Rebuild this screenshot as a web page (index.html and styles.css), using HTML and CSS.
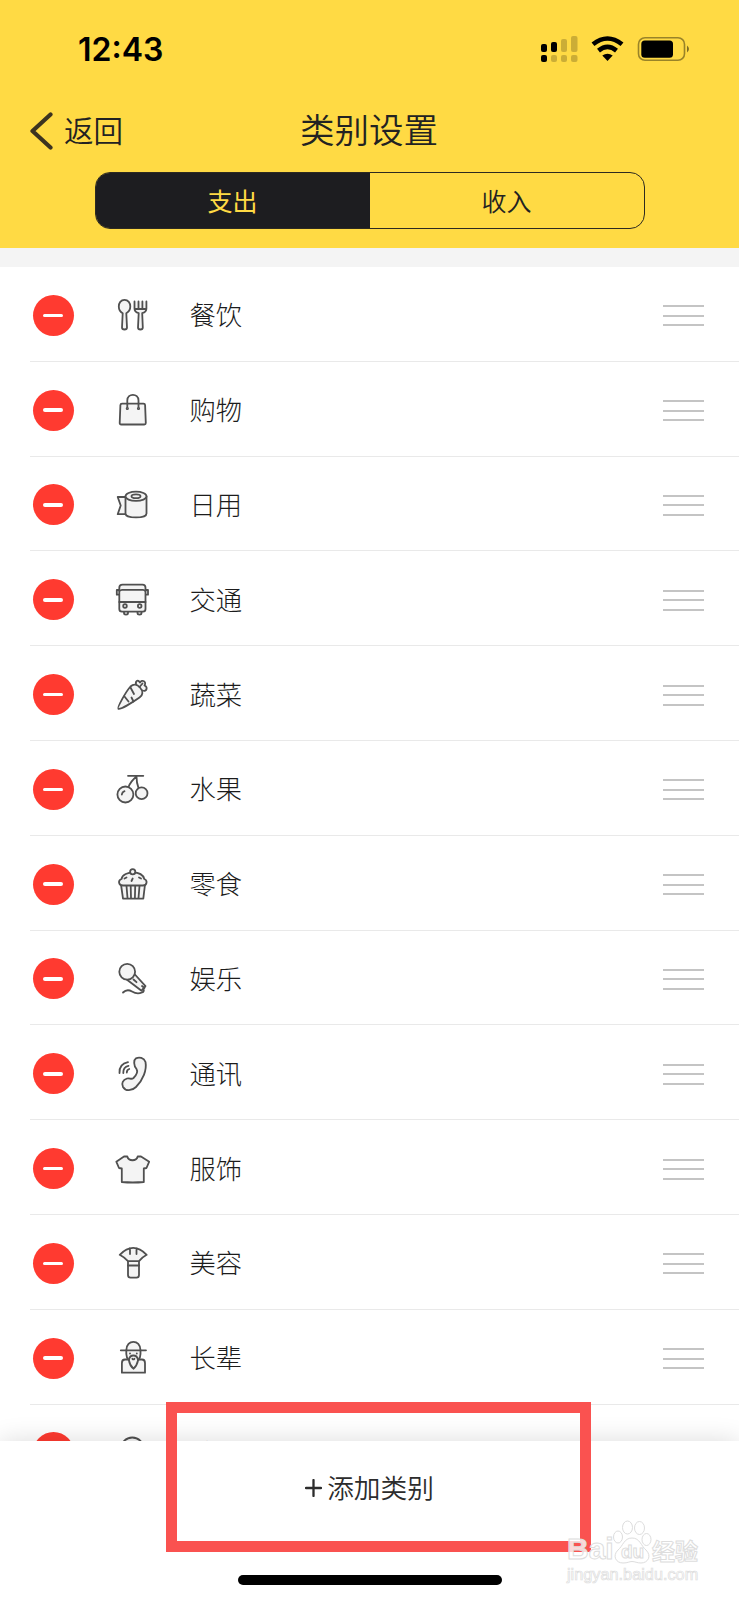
FILE: index.html
```html
<!DOCTYPE html>
<html lang="zh-CN">
<head>
    <meta charset="UTF-8">
    <meta name="viewport" content="width=device-width, initial-scale=1.0">
    <title>类别设置</title>
    <link rel="stylesheet" href="styles.css">
</head>
<body>
    <div class="app">
        <header class="header">
            <div class="status-bar">
                <span class="time">12:43</span>
                <svg class="status-icons" width="150" height="28" viewBox="0 0 150 28">
                    <g>
                        <rect x="1" y="10" width="6" height="8" rx="2"/>
                        <rect x="11" y="8" width="6" height="10" rx="2"/>
                        <rect x="1" y="21" width="6" height="7" rx="2"/>
                    </g>
                    <g opacity=".2">
                        <rect x="21" y="5" width="6" height="13" rx="2"/>
                        <rect x="31" y="2" width="6.500" height="16" rx="2"/>
                        <rect x="11" y="21" width="6" height="7" rx="2"/>
                        <rect x="21" y="21" width="6" height="7" rx="2"/>
                        <rect x="31" y="21" width="6.500" height="7" rx="2"/>
                    </g>
                    <g fill="none" stroke="#000" stroke-width="4.600">
                        <path d="M53 10.300Q67.500-1.300 82 10.300"/>
                        <path d="M58.500 16.600Q67.500 9.200 76.500 16.600"/>
                    </g>
                    <path d="M62.300 21.500Q67.500 18.200 72.700 21.500L67.500 27z"/>
                    <rect x="98.500" y="3.700" width="46" height="22.600" rx="6.500" fill="none" stroke="#000" stroke-width="1.600" opacity=".4"/>
                    <rect x="101.300" y="6.500" width="31.700" height="17.300" rx="3.500"/>
                    <path d="M147 11.500q4 3.500 0 7z" opacity=".5"/>
                </svg>
            </div>
            <div class="nav">
                <a class="back">
                    <svg width="24" height="38" viewBox="0 0 24 38"><path d="M20.500 2.500L2.500 19L20.500 35.500"/></svg>
                    <span>返回</span>
                </a>
                <h1>类别设置</h1>
            </div>
            <div class="tabs">
                <div class="tab active">支出</div>
                <div class="tab">收入</div>
            </div>
        </header>

        <ul class="list" id="list"></ul>

        <footer class="footer">
            <button class="add-btn"><svg width="17" height="18" viewBox="0 0 17 18"><path d="M1 9h15M8.500 1v16"/></svg><span>添加类别</span></button>
            <div class="home-bar"></div>
        </footer>

        <div class="highlight"></div>

        <div class="watermark">
            <div class="wm-logo">
                <span class="wm-bai">Bai</span>
                <span class="wm-paw">
                    <svg width="40" height="44" viewBox="0 0 40 44">
                        <ellipse cx="15.500" cy="7.500" rx="5" ry="6.500"/>
                        <ellipse cx="27.500" cy="8" rx="5" ry="6.500"/>
                        <ellipse cx="6" cy="17" rx="4.500" ry="6"/>
                        <ellipse cx="34.500" cy="19.500" rx="4.500" ry="6"/>
                        <path d="M20 18C12 18 11 26 6 30C0 36 4 43 11 43C16 43 17 41.500 20 41.500S25 43 29 43C36 43 40 36 34 30C29 26 28 18 20 18z"/>
                    </svg>
                    <b>du</b>
                </span>
                <span class="wm-cn">经验</span>
            </div>
            <div class="wm-url">jingyan.baidu.com</div>
        </div>
    </div>

    <script src="script.js"></script>
</body>
</html>
```

FILE: styles.css
```css
:root {
    --yellow: #ffda44;
    --dark: #1d1d20;
    --red: #ff3a30;
    --line: #e9e9e9;
}

* {
    box-sizing: border-box;
}

body {
    margin: 0;
    font-family: "Noto Sans CJK SC", sans-serif;
    color: #333;
    background: #fff;
}

.app {
    position: relative;
    width: 739px;
    height: 1600px;
    display: flex;
    flex-direction: column;
    overflow: hidden;
}

/* header */
.header {
    flex: none;
    height: 248px;
    background: var(--yellow);
}

.status-bar {
    height: 98px;
    padding: 0 49px 0 78px;
    display: flex;
    justify-content: space-between;
    align-items: center;
}

.time {
    font-family: Inter, sans-serif;
    font-size: 32px;
    font-weight: 600;
    color: #000;
}

.status-icons {
    margin-bottom: 2px;
}

.nav {
    height: 66px;
    padding-left: 30px;
    display: grid;
    grid-template-columns: 210px 258px;
    align-items: center;
}

.back {
    display: flex;
    align-items: center;
    gap: 10px;
    font-size: 29.5px;
    font-weight: 350;
    color: #222;
}

.back span {
    padding-bottom: 4px;
}

.back path {
    fill: none;
    stroke: #3c3320;
    stroke-width: 4.2;
    stroke-linecap: round;
    stroke-linejoin: round;
}

.nav h1 {
    margin: 0;
    padding-bottom: 6px;
    font-size: 34.5px;
    font-weight: 350;
    text-align: center;
    color: #222;
}

.tabs {
    width: 550px;
    height: 57px;
    margin: 8px 0 0 94.5px;
    display: flex;
    border: 1.5px solid #2d2a20;
    border-radius: 15px;
    overflow: hidden;
}

.tab {
    flex: 1;
    padding-bottom: 2px;
    display: flex;
    justify-content: center;
    align-items: center;
    font-size: 25px;
    font-weight: 350;
    color: #222;
}

.tab.active {
    background: var(--dark);
    color: var(--yellow);
    font-weight: 400;
}

/* category list */
.list {
    flex: 1;
    min-height: 0;
    margin: 0;
    padding: 0;
    list-style: none;
    border-top: 19px solid #f4f4f4;
    overflow: hidden;
}

.row {
    height: 94.8px;
    margin-left: 30px;
    padding: 3px 35px 0 2px;
    display: flex;
    align-items: center;
    border-bottom: 1px solid var(--line);
}

.minus {
    width: 41px;
    height: 41px;
    margin-left: 0.5px;
    border-radius: 50%;
    background: var(--red);
    display: flex;
    justify-content: center;
    align-items: center;
}

.minus::before {
    content: "";
    width: 20.5px;
    height: 3.5px;
    border-radius: 2px;
    background: #fff;
}

.icon {
    width: 36px;
    height: 36px;
    margin: 0 39.5px 0 40.5px;
    overflow: visible;
    fill: #f4f4f4;
    stroke: #505050;
    stroke-width: 1.8;
    stroke-linecap: round;
    stroke-linejoin: round;
}

.icon .no-fill {
    fill: none;
}

.name {
    flex: 1;
    padding-bottom: 3px;
    font-size: 26.3px;
    font-weight: 300;
    color: #1c1c1c;
}

.drag {
    width: 41px;
    height: 21px;
    margin-top: 1px;
    border: solid #c4c4c4;
    border-width: 2.5px 0;
    display: flex;
    align-items: center;
}

.drag::before {
    content: "";
    flex: 1;
    height: 2px;
    background: #c4c4c4;
}

/* bottom bar */
.footer {
    position: relative;
    flex: none;
    height: 159px;
    background: #fff;
    box-shadow: 0 0 24px rgba(0, 0, 0, 0.14);
    display: flex;
    flex-direction: column;
    align-items: center;
}

.add-btn {
    height: 94px;
    margin: 0;
    padding: 0;
    border: none;
    background: none;
    display: flex;
    align-items: center;
    gap: 5px;
    font-family: inherit;
    font-size: 26.7px;
    font-weight: 350;
    color: #2c2c2c;
}

.add-btn span {
    padding-bottom: 3px;
}

.add-btn path {
    stroke: #2c2c2c;
    stroke-width: 2.3;
    stroke-linecap: round;
}

.home-bar {
    width: 264px;
    height: 10px;
    margin-top: 40px;
    border-radius: 5px;
    background: #000;
}

/* marker frame over the add button */
.highlight {
    position: absolute;
    left: 166px;
    top: 1402px;
    width: 425px;
    height: 150px;
    border: 11px solid #fa5250;
}

.watermark {
    position: absolute;
    left: 567px;
    top: 1520px;
    color: rgba(255, 255, 255, 0.8);
    font-family: "Liberation Sans", "Noto Sans CJK SC", sans-serif;
    -webkit-text-stroke: 1px #ddd;
}

.wm-logo {
    height: 44px;
    display: flex;
    align-items: flex-end;
    line-height: 1;
}

.wm-bai {
    width: 45px;
    font-size: 30px;
    font-weight: 700;
}

.wm-paw {
    position: relative;
    width: 40px;
    height: 44px;
}

.wm-paw svg {
    fill: rgba(255, 255, 255, 0.8);
    stroke: #ddd;
}

.wm-paw b {
    position: absolute;
    left: 9px;
    top: 22px;
    font-size: 19px;
}

.wm-cn {
    font-size: 23px;
    font-weight: 700;
}

.wm-url {
    font-size: 16.3px;
    line-height: 20px;
    -webkit-text-stroke: 0.7px #ddd;
}
```

FILE: script.js
```javascript
const categories = [
    { name: "餐饮", icon: `
        <path d="M10.500 2.800C6.800 2.800 4.800 6 4.800 9.500C4.800 13 6.500 15 8.700 16.200L8 30.500Q8 32.500 10.500 32.500T13 30.500L12.300 16.200C14.500 15 16.300 13 16.300 9.500C16.300 6 14.200 2.800 10.500 2.800z"/>
        <path d="M20.500 4.500V11.500C20.500 14 22.200 15.500 24.700 16.200L24 30.500Q24 32.500 26.400 32.500T28.800 30.500L28.200 16.200C30.700 15.500 32.400 14 32.400 11.500V4.500M24.500 4.500v7.500M28.400 4.500v7.500M20.500 12h11.900"/>` },
    { name: "购物", icon: `
        <path d="M8 11.700H29.500Q31 11.700 31.100 13L31.800 31Q31.800 32.500 30.300 32.500H7.200Q5.700 32.500 5.700 31L6.400 13Q6.500 11.700 8 11.700z"/>
        <path class="no-fill" d="M13.300 16.500V8.500C13.300 1 24.500 1 24.500 8.500V16.500"/>
        <circle cx="13.300" cy="16.500" r=".7"/><circle cx="24.500" cy="16.500" r=".7"/>` },
    { name: "日用", icon: `
        <path d="M11.500 10H3.700L6.700 18.500L3.700 27.200H11.500"/>
        <path d="M11.500 9.300V26.500C11.500 31.800 32.500 31.800 32.500 26.500V9.300"/>
        <ellipse cx="22" cy="9.300" rx="10.500" ry="4.600"/>
        <ellipse cx="22" cy="9.300" rx="4.500" ry="1.900"/>` },
    { name: "交通", icon: `
        <path d="M10 30v1Q10 32.600 12 32.600T14 31V30M23.500 30v1Q23.500 32.600 25.500 32.600T27.500 31V30"/>
        <path d="M5.300 8H2.800V12.700H5.300M31.500 8H34V12.700H31.500"/>
        <path d="M8.500 2.700H28.500Q31.500 2.700 31.500 5.700V27Q31.500 29.700 29 29.700H8Q5.300 29.700 5.300 27V5.700Q5.300 2.700 8.500 2.700z"/>
        <path d="M5.500 9Q6.500 7.800 8 7.800H29Q30.500 7.800 31.300 9M5.300 20H31.500"/>
        <circle cx="11" cy="24" r="1.800"/><circle cx="25.700" cy="24" r="1.800"/>` },
    { name: "蔬菜", icon: `
        <path d="M22.500 8.500C20.500 4 24 2 26 5.500C28 2 33 4.500 30.500 8.500C34 10 33 15 28.500 13.500"/>
        <path d="M4.200 31.700C3 31 11.500 15 16.500 9.500C19.500 6.500 23 7 26 10.500C29.500 14.500 29 18 25.500 20.500C19 25 6 33 4.200 31.700z"/>
        <path class="no-fill" d="M25.500 10L28.500 6.500M16.500 10.500L20 17M10.500 19.500L14.500 24.500M17.500 20.500L19.500 24.500"/>` },
    { name: "水果", icon: `
        <path class="no-fill" d="M14 4.800H29.300M14.500 16Q16.500 10.500 22.500 5.500M22.500 5.500Q22.500 11.500 24.500 17"/>
        <circle cx="11.400" cy="23.500" r="8"/>
        <circle cx="27.600" cy="22.200" r="5.900"/>
        <path class="no-fill" d="M7.800 23.500Q8.200 21 10.500 20.200"/>` },
    { name: "零食", icon: `
        <path d="M7 18.500L9 32.700H29.300L31 18.500"/>
        <path d="M9 19.500C4 19.500 4 14 7.500 13C8.500 8.500 14 6.500 19 6.500S29 8.500 30.300 13C33.500 14 33.500 19.500 29 19.500z"/>
        <circle cx="18.700" cy="5.700" r="2.600"/>
        <path class="no-fill" d="M12.500 20l1 12M16.700 20l.3 12M21.200 20l-.3 12M25.500 20l-1 12M10.500 12.500l2-1M17.500 15l1.200-2.500M25 11.500l2 1"/>` },
    { name: "娱乐", icon: `
        <path d="M20 12.500L31.500 25.200L27.500 29.700L13 18.800"/>
        <circle cx="13.200" cy="10.800" r="7.900"/>
        <path class="no-fill" d="M19.500 18.500l3 2.700M9 31.500Q13 27.500 18 30.500T28 31.500Q30.500 30.500 29.500 28M28 25l2.500 2"/>` },
    { name: "通讯", icon: `
        <path d="M22 2.300C25 1 30 1.500 31.500 6C33 14 29 24 22 31C18 35 11.500 35.500 9 31C7 27 9 24 13 22.500C16 21.500 17 24 19.500 22C22.500 19 24 15.500 22.500 13C19.500 9.500 19.500 4 22 2.300z"/>
        <path class="no-fill" d="M5.500 17Q5 8 14 6.200M9.300 17Q9 11 14.500 9.800M12.800 16.500Q12.800 13.800 15.200 13"/>` },
    { name: "服饰", icon: `
        <path d="M13.300 5.500C14.500 10.500 22.500 10.500 23.700 5.500H27L35.200 10.700L32.500 17L29.800 17.500V31Q18.700 32 7.800 31V17.500L5 17L2.300 10.700L10 5.500z"/>` },
    { name: "美容", icon: `
        <path d="M14 16.500V30Q14 32.600 16.500 32.600H22.500Q25 32.600 25 30V16.500"/>
        <path d="M5.700 9.800Q19.200-4 32.700 9.800Q28.500 12 25 16.200H14Q10 12 5.700 9.800z"/>
        <path class="no-fill" d="M14 20.500H25M16 9V5L15.500 3.500M22.500 9V5L23 3.500"/>` },
    { name: "长辈", icon: `
        <path d="M13.500 19.500H11Q7.900 19.500 7.900 23V32.700H31V23Q31 19.500 28 19.500H25"/>
        <path d="M12.300 10.500V14C12.300 16 13.500 19 15 20.500C15.500 24 17.500 27 19.400 28.700C21.500 27 23.300 24 24 20.500C25.500 19 26.500 16 26.500 14V10.500"/>
        <path d="M12.300 10.300C12.300-1 26.500-1 26.500 10.300M6.800 10.300H32M15 20Q15.500 15.500 19.400 15.500T24 20M18.400 18.800Q19.400 20 20.400 18.800"/>
        <path d="M16 13.300v.3M22.800 13.300v.3"/>` },
    { name: "孩子", icon: `
        <circle cx="18.300" cy="14" r="11.500"/>` }
];

document.getElementById("list").innerHTML = categories.map(c => `
    <li class="row">
        <span class="minus"></span>
        <svg class="icon" viewBox="0 0 36 36">${c.icon}</svg>
        <span class="name">${c.name}</span>
        <span class="drag"></span>
    </li>`).join("");
```
